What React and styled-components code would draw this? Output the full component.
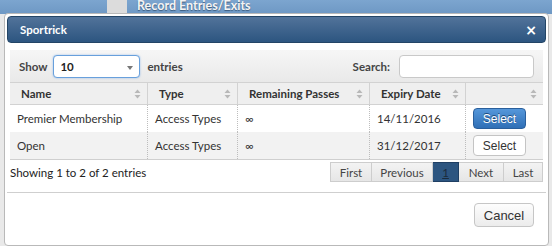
import React from "react";
import styled, { createGlobalStyle } from "styled-components";

const GlobalStyle = createGlobalStyle`
  html, body {
    margin: 0;
    padding: 0;
    background: #e6e6e6;
    font-family: Lato, "Open Sans", sans-serif;
    font-size: 11.5px;
    color: #333;
  }
  * { box-sizing: border-box; }
`;

const Page = styled.div`
  position: relative;
  width: 552px;
  height: 246px;
  overflow: hidden;
  background: #e9e9e9;
`;

const TopBar = styled.div`
  height: 14px;
  background: linear-gradient(#7ca5cf, #6e98c4);
  display: flex;
  align-items: flex-start;
`;

const TopTab = styled.div`
  margin-left: 107px;
  width: 20px;
  height: 14px;
  background: #dcdcdc;
`;

const TopTitle = styled.div`
  margin-left: 10px;
  font-weight: 700;
  font-size: 12.5px;
  line-height: 12px;
  color: #f4f4f4;
  text-shadow: 0 1px 1px #3b5a7c;
`;

const Modal = styled.div`
  position: absolute;
  left: 4px;
  top: 13px;
  width: 545px;
  height: 233px;
  background: #fff;
  border: 1px solid #b9b9b9;
  border-radius: 4px;
  padding: 2px;
  display: flex;
  flex-direction: column;
`;

const Header = styled.div`
  height: 27px;
  border: 1px solid #234566;
  border-radius: 4px;
  background: linear-gradient(#52739a, #2c5580);
  display: flex;
  align-items: center;
  justify-content: space-between;
  padding: 0 8px 0 12px;
  color: #fff;
  font-weight: 700;
`;

const Close = styled.span`
  font-family: "DejaVu Sans", sans-serif;
  font-size: 14px;
  font-weight: 700;
  line-height: 1;
`;

const Body = styled.div`
  padding: 7px 3px 0 3px;
`;

const Toolbar = styled.div`
  height: 32px;
  background: linear-gradient(#f6f6f6, #e9e9e9);
  display: flex;
  align-items: center;
  padding: 0 9px 0 9px;
  font-weight: 700;
  color: #444;
`;

const SelectBox = styled.div`
  width: 87px;
  height: 23px;
  margin: 0 7px 0 6px;
  border: 1px solid #68a0dc;
  border-radius: 4px;
  background: #fff;
  box-shadow: 0 0 2px rgba(82, 150, 230, 0.6);
  display: flex;
  align-items: center;
  justify-content: space-between;
  padding: 0 6px 0 6px;
  color: #222;
`;

const Caret = styled.span`
  width: 0;
  height: 0;
  margin-top: 4px;
  border-left: 3px solid transparent;
  border-right: 3px solid transparent;
  border-top: 4px solid #777;
`;

const Spacer = styled.div`
  flex: 1;
`;

const SearchInput = styled.div`
  width: 135px;
  height: 23px;
  margin-left: 9px;
  border: 1px solid #c9c9c9;
  border-radius: 4px;
  background: #fff;
`;

const Table = styled.div`
  display: grid;
  grid-template-columns: 137px 90px 132px 96px 78px;
  border-bottom: 1px solid #cfcfcf;
`;

const HeadCell = styled.div`
  height: 23px;
  background: #efefef;
  border-top: 1px solid #d2d2d2;
  border-bottom: 1px solid #d2d2d2;
  border-left: ${(p) => (p.$first ? "none" : "1px solid #d2d2d2")};
  display: flex;
  align-items: center;
  justify-content: space-between;
  padding: 0 6px 0 11px;
  font-weight: 700;
  color: #333;
`;

const SortIcon = () => (
  <svg width="7" height="10" viewBox="0 0 7 10">
    <path d="M3.5 0.5 L6.5 4 L0.5 4 Z" fill="#b8b8b8" />
    <path d="M3.5 9.5 L6.5 6 L0.5 6 Z" fill="#b8b8b8" />
  </svg>
);

const Cell = styled.div`
  height: 27px;
  background: ${(p) => (p.$odd ? "#f2f2f2" : "#fff")};
  border-left: ${(p) => (p.$first ? "none" : "1px dotted #bdbdbd")};
  display: flex;
  align-items: center;
  padding: 0 7px;
  color: #333;
`;

const SelectButton = styled.button`
  width: 53px;
  height: 21px;
  padding: 0;
  border-radius: 4px;
  font-family: "Liberation Sans", Arial, sans-serif;
  font-size: 12px;
  cursor: pointer;
  border: 1px solid ${(p) => (p.$primary ? "#2a5f9c" : "#c4c4c4")};
  background: ${(p) =>
    p.$primary ? "linear-gradient(#5597da, #2f6fb6)" : "#fff"};
  color: ${(p) => (p.$primary ? "#fff" : "#333")};
  text-shadow: ${(p) => (p.$primary ? "0 -1px 0 #1e4a7a" : "none")};
`;

const Footer = styled.div`
  display: flex;
  align-items: flex-start;
  justify-content: space-between;
  padding-top: 2px;
  height: 30px;
`;

const Info = styled.div`
  padding-top: 4px;
  color: #222;
`;

const Pager = styled.div`
  display: flex;
`;

const PageButton = styled.div`
  height: 20px;
  width: ${(p) => p.$w}px;
  display: flex;
  align-items: center;
  justify-content: center;
  border: 1px solid #cdcdcd;
  border-left: ${(p) => (p.$first ? "1px solid #cdcdcd" : "none")};
  background: ${(p) => (p.$active ? "#2c5580" : "linear-gradient(#f3f3f3, #e6e6e6)")};
  border-color: ${(p) => (p.$active ? "#1f3f63" : "#cdcdcd")};
  color: ${(p) => (p.$active ? "#1b2b3c" : "#444")};
  text-decoration: ${(p) => (p.$active ? "underline" : "none")};
`;

const Divider = styled.div`
  height: 1px;
  background: #cfcfcf;
  margin-top: 2px;
`;

const Actions = styled.div`
  display: flex;
  justify-content: flex-end;
  padding: 10px 12px 0 0;
`;

const CancelButton = styled.button`
  width: 60px;
  height: 24px;
  padding: 0;
  border: 1px solid #c6c6c6;
  border-radius: 4px;
  background: linear-gradient(#fdfdfd, #ececec);
  font-family: "Liberation Sans", Arial, sans-serif;
  font-size: 13px;
  color: #333;
`;

const rows = [
  { name: "Premier Membership", type: "Access Types", passes: "∞", expiry: "14/11/2016", primary: true },
  { name: "Open", type: "Access Types", passes: "∞", expiry: "31/12/2017", primary: false },
];

const columns = ["Name", "Type", "Remaining Passes", "Expiry Date", ""];

const pages = [
  { label: "First", w: 42 },
  { label: "Previous", w: 61 },
  { label: "1", w: 26, active: true },
  { label: "Next", w: 45 },
  { label: "Last", w: 39 },
];

const App = () => {
  return (
    <>
      <GlobalStyle />
      <Page>
        <TopBar>
          <TopTab />
          <TopTitle>Record Entries/Exits</TopTitle>
        </TopBar>
        <Modal>
          <Header>
            <span>Sportrick</span>
            <Close>×</Close>
          </Header>
          <Body>
            <Toolbar>
              Show
              <SelectBox>
                10
                <Caret />
              </SelectBox>
              entries
              <Spacer />
              Search:
              <SearchInput />
            </Toolbar>
            <Table>
              {columns.map((c, i) => (
                <HeadCell key={i} $first={i === 0}>
                  <span>{c}</span>
                  <SortIcon />
                </HeadCell>
              ))}
              {rows.map((r, i) => (
                <React.Fragment key={r.name}>
                  <Cell $first $odd={i % 2 === 1}>{r.name}</Cell>
                  <Cell $odd={i % 2 === 1}>{r.type}</Cell>
                  <Cell $odd={i % 2 === 1}>{r.passes}</Cell>
                  <Cell $odd={i % 2 === 1}>{r.expiry}</Cell>
                  <Cell $odd={i % 2 === 1}>
                    <SelectButton $primary={r.primary}>Select</SelectButton>
                  </Cell>
                </React.Fragment>
              ))}
            </Table>
            <Footer>
              <Info>Showing 1 to 2 of 2 entries</Info>
              <Pager>
                {pages.map((p, i) => (
                  <PageButton key={p.label} $w={p.w} $first={i === 0} $active={p.active}>
                    {p.label}
                  </PageButton>
                ))}
              </Pager>
            </Footer>
          </Body>
          <Divider />
          <Actions>
            <CancelButton>Cancel</CancelButton>
          </Actions>
        </Modal>
      </Page>
    </>
  );
};

export default App;
